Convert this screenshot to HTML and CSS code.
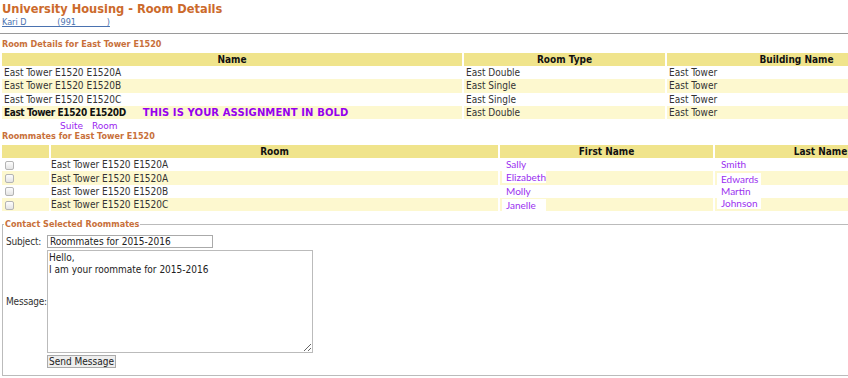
FILE: index.html
```html
<!DOCTYPE html>
<html>
  <head>
    <meta charset='UTF-8'>
    <title>University Housing - Room Details</title>
    <link rel="stylesheet" href="styles.css">
  </head>
  <body>
    <div class='page'>
      <div class='header'>
        <div class='header__title'>University Housing - Room Details</div>
        <a class='header__user' href='#'>Kari D&nbsp;&nbsp;&nbsp;&nbsp;&nbsp;&nbsp;&nbsp;&nbsp;&nbsp;&nbsp;&nbsp;&nbsp;(991&nbsp;&nbsp;&nbsp;&nbsp;&nbsp;&nbsp;&nbsp;&nbsp;&nbsp;&nbsp;&nbsp;&nbsp;)</a>
      </div>

      <div class='section__title'>Room Details for East Tower E1520</div>
      <table class='grid grid--rooms'>
        <tr>
          <th class='col--name'>Name</th>
          <th class='col--type'>Room Type</th>
          <th>Building Name</th>
        </tr>
        <tr>
          <td>East Tower E1520 E1520A</td>
          <td>East Double</td>
          <td>East Tower</td>
        </tr>
        <tr class='alt'>
          <td>East Tower E1520 E1520B</td>
          <td>East Single</td>
          <td>East Tower</td>
        </tr>
        <tr>
          <td>East Tower E1520 E1520C</td>
          <td>East Single</td>
          <td>East Tower</td>
        </tr>
        <tr class='alt mine'>
          <td><b class='mine__room'>East Tower E1520 E1520D</b><span class='note note--big'>THIS IS YOUR ASSIGNMENT IN BOLD</span></td>
          <td>East Double</td>
          <td>East Tower</td>
        </tr>
      </table>
      <div class='legend-note'><span class='note'>Suite</span><span class='note'>Room</span></div>

      <div class='section__title section__title--tight'>Roommates for East Tower E1520</div>
      <table class='grid grid--mates'>
        <tr>
          <th class='col--check'></th>
          <th class='col--room'>Room</th>
          <th class='col--first'>First Name</th>
          <th>Last Name</th>
        </tr>
        <tr>
          <td><input type='checkbox' class='pick'></td>
          <td>East Tower E1520 E1520A</td>
          <td><span class='tag'>Sally</span></td>
          <td><span class='tag'>Smith</span></td>
        </tr>
        <tr class='alt'>
          <td><input type='checkbox' class='pick'></td>
          <td>East Tower E1520 E1520A</td>
          <td><span class='tag tag--up'>Elizabeth</span></td>
          <td><span class='tag tag--down'>Edwards</span></td>
        </tr>
        <tr>
          <td><input type='checkbox' class='pick'></td>
          <td>East Tower E1520 E1520B</td>
          <td><span class='tag'>Molly</span></td>
          <td><span class='tag'>Martin</span></td>
        </tr>
        <tr class='alt'>
          <td><input type='checkbox' class='pick'></td>
          <td>East Tower E1520 E1520C</td>
          <td><span class='tag tag--down'>Janelle</span></td>
          <td><span class='tag tag--up'>Johnson</span></td>
        </tr>
      </table>

      <fieldset class='contact'>
        <legend class='contact__legend'>Contact Selected Roommates</legend>
        <div class='contact__form'>
          <label class='contact__label'>Subject:</label>
          <input class='contact__subject' type='text' value='Roommates for 2015-2016'>
          <label class='contact__label'>Message:</label>
          <textarea class='contact__message'>Hello,
I am your roommate for 2015-2016</textarea>
          <span></span>
          <div><button class='contact__btn'>Send Message</button></div>
        </div>
      </fieldset>
    </div>
  </body>
</html>
```

FILE: styles.css
```css
html, body {
  margin: 0;
  font-family: 'DejaVu Sans Condensed', 'DejaVu Sans', Verdana, sans-serif;
  font-stretch: condensed;
  font-size: 10px;
  color: #333;
  background-color: #fff;
}

.page {
  width: 848px;
  height: 378px;
  overflow: hidden;
}

.header {
  padding: 1px 2px 0;
  border-bottom: 1px solid #9a9a9a;
  height: 34px;
  box-sizing: border-box;
  width: 848px;
}

.header__title {
  font-size: 12.7px;
  font-weight: bold;
  line-height: 16px;
  color: #cc6a2c;
}

.header__user {
  display: block;
  font-size: 9px;
  line-height: 11px;
  color: #4a72b0;
}

.section__title {
  margin: 4px 0 0 2px;
  font-size: 9px;
  font-weight: bold;
  line-height: 12px;
  color: #c8703a;
}

.section__title--tight {
  margin-top: 0;
  line-height: 11px;
}

.grid {
  width: 928px;
  border-spacing: 2px 0;
  margin-top: 3px;
  table-layout: fixed;
}

.grid th {
  background-color: #f0e48c;
  color: #111;
  font-weight: bold;
  height: 13px;
  padding: 0;
  line-height: 13px;
  text-align: center;
}

.grid td {
  height: 13.3px;
  padding: 0 0 0 2px;
  line-height: 13px;
  white-space: nowrap;
}

.grid .alt td {
  background-color: #fdf8cf;
}

.mine__room {
  color: #111;
  letter-spacing: -0.4px;
}

.col--name { width: 460px; }
.col--type { width: 201px; }
.col--check { width: 47px; }
.col--room { width: 447px; }
.col--first { width: 213px; }

.grid--mates td:nth-child(2) {
  padding-left: 0;
}

.note {
  color: #9b1df0;
  font-family: 'DejaVu Sans', sans-serif;
  font-stretch: normal;
  font-size: 9px;
  font-weight: normal;
}

.note--big {
  margin-left: 17px;
  font-size: 10px;
  font-weight: bold;
  letter-spacing: 0.1px;
  color: #9500ee;
}

.legend-note {
  margin-top: 1px;
  padding-left: 60px;
  line-height: 11px;
  height: 11px;
}

.legend-note .note + .note {
  margin-left: 9px;
}

.pick {
  appearance: none;
  -webkit-appearance: none;
  display: inline-block;
  width: 9px;
  height: 9px;
  margin: 0 0 0 1px;
  border: 1px solid #b4b4b4;
  border-radius: 2px;
  background: linear-gradient(#fdfdfd, #e4e4e4);
  vertical-align: middle;
}

.tag {
  display: inline-block;
  padding: 0 4px;
  width: 36px;
  line-height: 12px;
  background-color: #fff;
  color: #9b30f0;
  font-family: Lato, sans-serif;
  font-size: 10px;
}

.tag--up {
  position: relative;
  top: -1px;
}

.tag--down {
  position: relative;
  top: 1px;
}

.contact {
  margin: 7px 0 0 2px;
  padding: 5px 4px 7px 3px;
  width: 900px;
  border: 1px solid #bbb;
}

.contact__legend {
  margin-left: -2px;
  padding: 0 1px;
  font-size: 9px;
  font-weight: bold;
  color: #c8703a;
  line-height: 12px;
}

.contact__form {
  display: grid;
  grid-template-columns: 41px auto;
  grid-row-gap: 2px;
  align-items: center;
}

.contact__label {
  color: #333;
  white-space: nowrap;
  letter-spacing: -0.2px;
}

.contact__subject {
  width: 166px;
  height: 13px;
  box-sizing: border-box;
  margin: 0;
  padding: 0 2px;
  border: 1px solid #aaa;
  font-family: inherit;
  font-size: 10px;
  color: #222;
}

.contact__message {
  width: 266px;
  height: 103px;
  box-sizing: border-box;
  margin: 0;
  padding: 1px 1px;
  border: 1px solid #bbb;
  font-family: inherit;
  font-size: 10px;
  line-height: 12px;
  color: #222;
  resize: both;
}

.contact__btn {
  height: 13px;
  padding: 0 1px;
  margin: 0;
  border: 1px solid #aaa;
  background-color: #eee;
  font-family: inherit;
  font-size: 10px;
  line-height: 10px;
  color: #222;
}
```
